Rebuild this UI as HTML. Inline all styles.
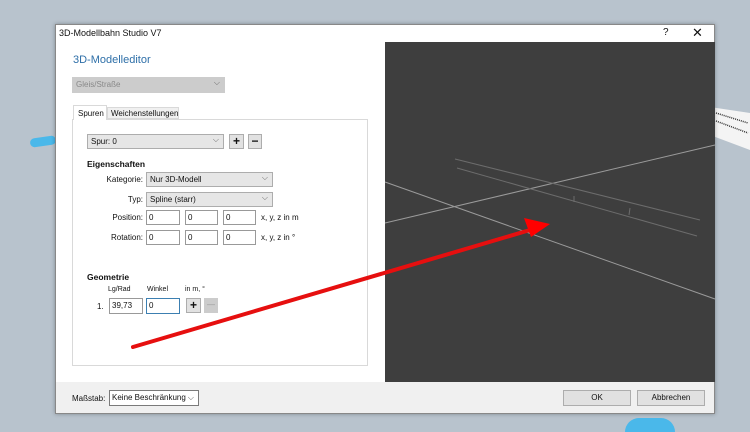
<!DOCTYPE html><html><head><style>
*{margin:0;padding:0;box-sizing:border-box}
body{width:750px;height:428px;background:#b8c3cd;position:relative;overflow:hidden;font-family:"Liberation Sans",sans-serif;font-size:8px;color:#111}
.a{position:absolute}
.in{position:absolute;background:#fff;border:1px solid #999;padding:2px 2px;font-size:8px;line-height:10px}
.cb{position:absolute;background:#e6e6e6;border:1px solid #adadad;padding:2px 3px;font-size:8px;line-height:10px}
.cb:after{content:"⌵";position:absolute;right:4px;top:0px;color:#666;font-size:8px}
.btn{position:absolute;background:#e1e1e1;border:1px solid #adadad;text-align:center;font-size:12px;line-height:12px;font-weight:bold}
.lbl{position:absolute;text-align:right;font-size:8px}
</style></head><body>
<div class="a" style="left:30px;top:137px;width:26px;height:9px;background:#4ab8ea;border-radius:5px;transform:rotate(-8deg)"></div>
<div class="a" style="left:625px;top:418px;width:50px;height:14px;background:#4ab8ea;border-radius:25px 25px 0 0"></div>
<svg class="a" style="left:700px;top:95px" width="50" height="70"><polygon points="10,12 50,18 50,55 10,40" fill="#f4f4f4"/><g stroke="#333" stroke-width="1.5" stroke-dasharray="1,1"><line x1="16" y1="18" x2="48" y2="28"/><line x1="16" y1="26" x2="48" y2="38"/></g></svg>
<div class="a" style="left:55px;top:24px;width:660px;height:390px;background:#fff;border:1px solid #888;box-shadow:0 0 4px rgba(0,0,0,.3)"></div>
<div class="a" style="left:59px;top:28px;font-size:9px">3D-Modellbahn Studio V7</div>
<div class="a" style="left:663px;top:27px;font-size:10px">?</div>
<div class="a" style="left:692px;top:25px;font-size:13px">✕</div>
<div class="a" style="left:56px;top:382px;width:658px;height:31px;background:#f0f0f0"></div>
<div class="a" style="left:385px;top:42px;width:330px;height:340px;background:#3e3e3e"></div>
<div class="a" style="left:73px;top:54px;font-size:11px;color:#2e6fa8">3D-Modelleditor</div>
<div class="cb" style="left:72px;top:77px;width:153px;height:16px;background:#ccc;border-color:#ccc;color:#888">Gleis/Straße</div>
<div class="a" style="left:72px;top:119px;width:296px;height:247px;border:1px solid #d9d9d9;background:#fff"></div>
<div class="a" style="left:73px;top:105px;width:34px;height:15px;background:#fff;border:1px solid #d9d9d9;border-bottom:none;padding:3px 4px">Spuren</div>
<div class="a" style="left:107px;top:107px;width:72px;height:12px;background:#f0f0f0;border:1px solid #d9d9d9;padding:1px 3px">Weichenstellungen</div>
<div class="cb" style="left:87px;top:134px;width:137px;height:15px">Spur: 0</div>
<div class="btn" style="left:229px;top:134px;width:15px;height:15px">+</div>
<div class="btn" style="left:248px;top:134px;width:14px;height:15px">−</div>
<div class="a" style="left:87px;top:159px;font-size:8.5px;font-weight:bold">Eigenschaften</div>
<div class="lbl" style="left:90px;width:53px;top:175px">Kategorie:</div>
<div class="cb" style="left:146px;top:172px;width:127px;height:15px">Nur 3D-Modell</div>
<div class="lbl" style="left:90px;width:53px;top:195px">Typ:</div>
<div class="cb" style="left:146px;top:192px;width:127px;height:15px">Spline (starr)</div>
<div class="lbl" style="left:90px;width:53px;top:213px">Position:</div>
<div class="in" style="left:146px;top:210px;width:34px;height:15px">0</div>
<div class="in" style="left:185px;top:210px;width:33px;height:15px">0</div>
<div class="in" style="left:223px;top:210px;width:33px;height:15px">0</div>
<div class="a" style="left:261px;top:213px">x, y, z in m</div>
<div class="lbl" style="left:90px;width:53px;top:233px">Rotation:</div>
<div class="in" style="left:146px;top:230px;width:34px;height:15px">0</div>
<div class="in" style="left:185px;top:230px;width:33px;height:15px">0</div>
<div class="in" style="left:223px;top:230px;width:33px;height:15px">0</div>
<div class="a" style="left:261px;top:233px">x, y, z in °</div>
<div class="a" style="left:87px;top:272px;font-size:8.5px;font-weight:bold">Geometrie</div>
<div class="a" style="left:108px;top:286px;font-size:7px">Lg/Rad</div>
<div class="a" style="left:147px;top:286px;font-size:7px">Winkel</div>
<div class="a" style="left:185px;top:286px;font-size:7px">in m, °</div>
<div class="a" style="left:97px;top:302px">1.</div>
<div class="in" style="left:109px;top:298px;width:34px;height:16px">39,73</div>
<div class="in" style="left:146px;top:298px;width:34px;height:16px;border-color:#3c7fb1">0</div>
<div class="btn" style="left:186px;top:298px;width:15px;height:15px">+</div>
<div class="btn" style="left:204px;top:298px;width:14px;height:15px;background:#ccc;border-color:#ccc;color:#999;font-weight:normal;font-size:8px">—</div>
<div class="a" style="left:72px;top:394px">Maßstab:</div>
<div class="in" style="left:109px;top:390px;width:90px;height:16px;border-color:#7a7a7a">Keine Beschränkung<span style="position:absolute;right:4px;color:#555">⌵</span></div>
<div class="a" style="left:563px;top:390px;width:68px;height:16px;background:#e1e1e1;border:1px solid #adadad;text-align:center;line-height:14px">OK</div>
<div class="a" style="left:637px;top:390px;width:68px;height:16px;background:#e1e1e1;border:1px solid #adadad;text-align:center;line-height:14px">Abbrechen</div>
<svg class="a" style="left:0;top:0" width="750" height="428">
<g stroke="#9a9a9a" stroke-width="1"><line x1="385" y1="223" x2="715" y2="145"/><line x1="385" y1="182" x2="715" y2="299"/></g>
<g stroke="#6c6c6c" stroke-width="1"><line x1="455" y1="159" x2="700" y2="220"/><line x1="457" y1="168" x2="697" y2="236"/><line x1="574" y1="196" x2="574" y2="202"/><line x1="630" y1="208" x2="629" y2="215"/></g>
<line x1="133" y1="347" x2="530" y2="230" stroke="#e60f0f" stroke-width="4" stroke-linecap="round"/>
<polygon points="550,224 524,218 531,237" fill="#f00"/>
</svg>
</body></html>
